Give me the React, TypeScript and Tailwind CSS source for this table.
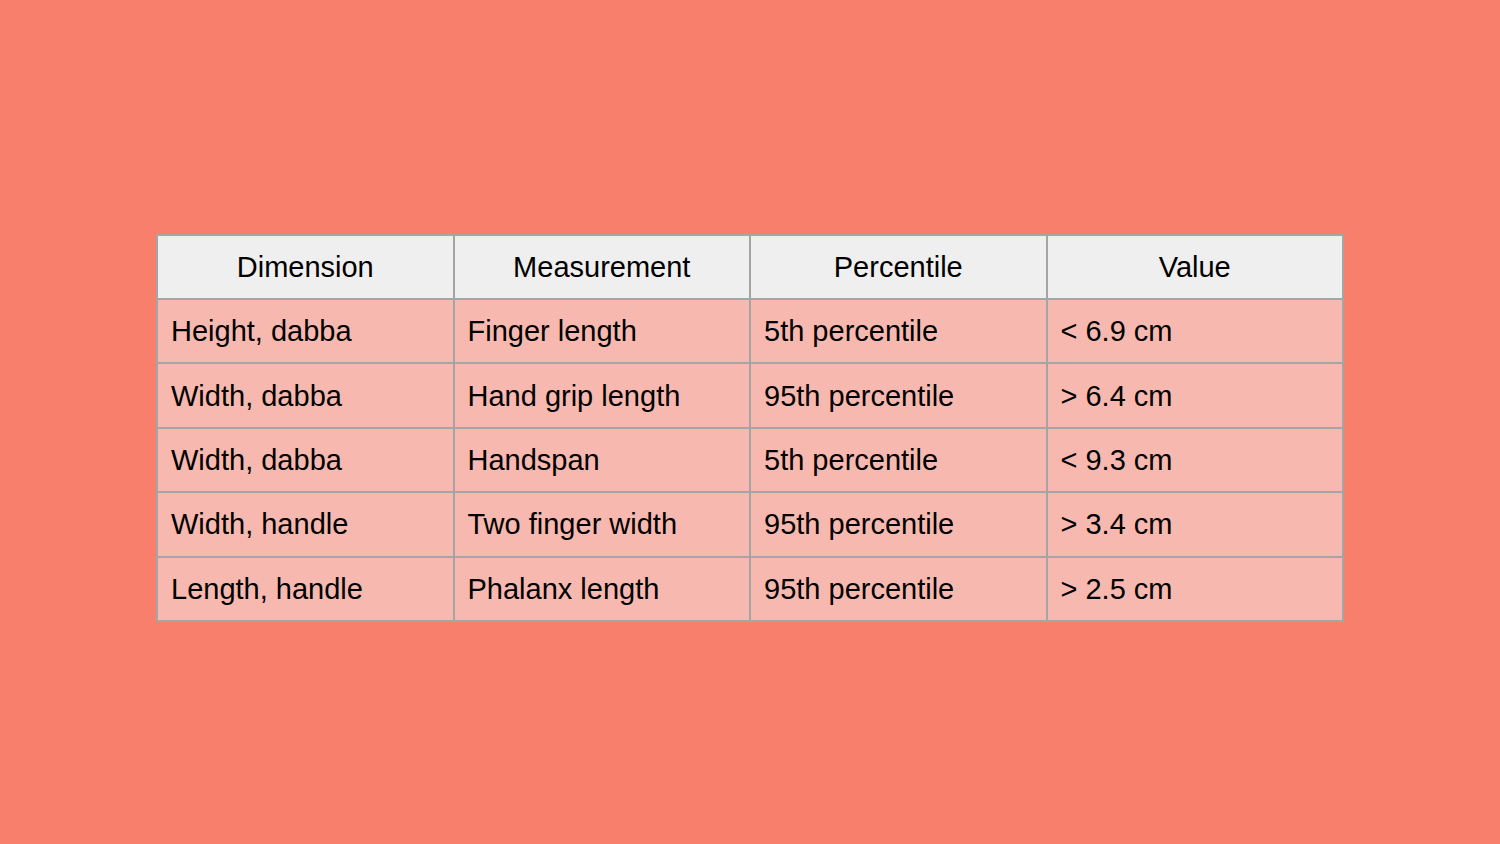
const headers = ['Dimension', 'Measurement', 'Percentile', 'Value'];

const rows: string[][] = [
    ['Height, dabba', 'Finger length', '5th percentile', '< 6.9 cm'],
    ['Width, dabba', 'Hand grip length', '95th percentile', '> 6.4 cm'],
    ['Width, dabba', 'Handspan', '5th percentile', '< 9.3 cm'],
    ['Width, handle', 'Two finger width', '95th percentile', '> 3.4 cm'],
    ['Length, handle', 'Phalanx length', '95th percentile', '> 2.5 cm'],
];

export default function App() {
    return (
        <main
            className="w-[1500px] h-[844px] bg-[#f87f6b] flex justify-center pt-[234px] text-black"
            style={{ fontFamily: '"Liberation Sans", Arial, sans-serif' }}
        >
            <table className="w-[1188px] h-fit border-collapse border-2 border-[#a5a5a5] table-fixed text-[29px] leading-none">
                <thead>
                    <tr className="bg-[#efefef]">
                        {headers.map((h) => (
                            <th key={h} className="h-[64px] border-2 border-[#a5a5a5] font-normal text-center px-[13px] pt-px">
                                {h}
                            </th>
                        ))}
                    </tr>
                </thead>
                <tbody>
                    {rows.map((row, i) => (
                        <tr key={i} className="bg-[#f7b9af]">
                            {row.map((cell, j) => (
                                <td key={j} className="h-[64.4px] border-2 border-[#a5a5a5] text-left px-[13px] pt-px">
                                    {cell}
                                </td>
                            ))}
                        </tr>
                    ))}
                </tbody>
            </table>
        </main>
    );
}
